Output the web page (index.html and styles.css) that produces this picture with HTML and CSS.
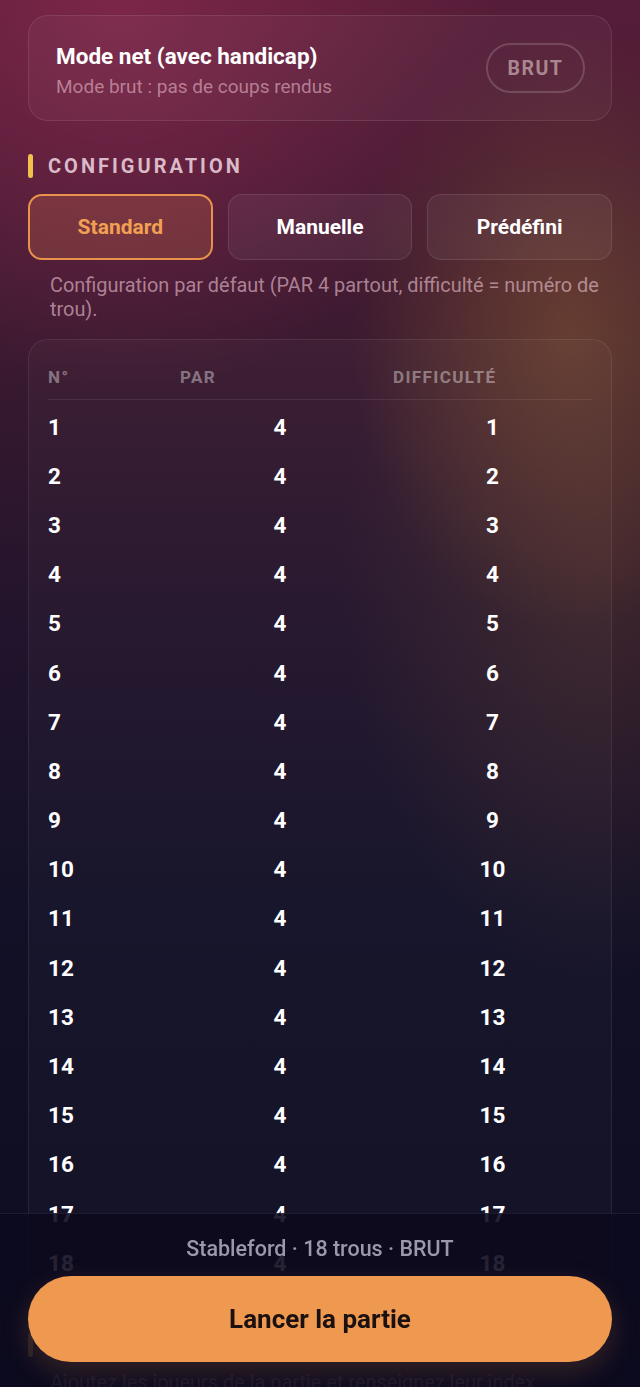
FILE: index.html
```html
<!DOCTYPE html>
<html lang="fr">
<head>
    <meta charset="UTF-8">
    <meta name="viewport" content="width=device-width, initial-scale=1.0">
    <title>Nouvelle partie</title>
    <link rel="stylesheet" href="styles.css">
</head>
<body>
    <div class="page">
        <div class="mode-card">
            <div class="mode-text">
                <div class="mode-title">Mode net (avec handicap)</div>
                <div class="mode-sub">Mode brut : pas de coups rendus</div>
            </div>
            <button class="mode-pill">BRUT</button>
        </div>

        <div class="section-title">CONFIGURATION</div>
        <div class="config-tabs">
            <button class="config-tab active">Standard</button>
            <button class="config-tab">Manuelle</button>
            <button class="config-tab">Prédéfini</button>
        </div>
        <p class="config-desc">Configuration par défaut (PAR 4 partout, difficulté = numéro de trou).</p>

        <div class="holes-card">
            <div class="holes-head">
                <span>N°</span>
                <span>PAR</span>
                <span>DIFFICULTÉ</span>
            </div>
            <div class="holes-body" id="holes"></div>
        </div>

        <div class="section-title">JOUEURS</div>
        <p class="config-desc">Ajoutez les joueurs de la partie et renseignez leur index.</p>
    </div>

    <div class="bottom-bar">
        <div class="summary">Stableford · 18 trous · BRUT</div>
        <button class="start-button">Lancer la partie</button>
    </div>

    <script>
        // 18 trous, PAR 4 partout, difficulté = numéro du trou
        const holes = document.getElementById('holes');
        for (let i = 1; i <= 18; i++) {
            const row = document.createElement('div');
            row.className = 'hole-row';
            row.innerHTML = `<span>${i}</span><span class="par">4</span><span class="diff">${i}</span>`;
            holes.appendChild(row);
        }
    </script>
</body>
</html>
```

FILE: styles.css
```css
body {
    margin: 0;
    min-height: 1387px;
    font-family: Roboto, 'Noto Sans', sans-serif;
    color: #ffffff;
    background:
        radial-gradient(circle at 120px 10px, rgba(140, 42, 80, 0.7), rgba(140, 42, 80, 0) 380px),
        radial-gradient(ellipse 220px 300px at 570px 330px, rgba(125, 80, 50, 0.6), rgba(125, 80, 50, 0)),
        radial-gradient(ellipse 260px 420px at 600px 560px, rgba(90, 55, 45, 0.5), rgba(90, 55, 45, 0)),
        linear-gradient(180deg, #561d38 0px, #3c1a30 330px, #22142c 620px, #131127 900px, #0d0c1f 1387px);
}

button {
    font-family: inherit;
    cursor: pointer;
}

.page {
    padding: 15px 28px 200px;
}

.mode-card {
    display: flex;
    align-items: center;
    justify-content: space-between;
    height: 104px;
    padding: 0 26px 0 27px;
    border: 1px solid rgba(255, 255, 255, 0.09);
    border-radius: 20px;
    background: rgba(255, 255, 255, 0.035);
}

.mode-text {
    padding-top: 5px;
}

.mode-title {
    font-size: 22.5px;
    font-weight: 700;
    line-height: 28px;
}

.mode-sub {
    font-size: 19px;
    line-height: 26px;
    margin-top: 4px;
    color: rgba(230, 185, 200, 0.6);
}

.mode-pill {
    width: 99px;
    height: 50px;
    border: 2px solid rgba(255, 255, 255, 0.17);
    border-radius: 25px;
    background: transparent;
    color: rgba(225, 200, 200, 0.62);
    font-size: 19.5px;
    font-weight: 700;
    letter-spacing: 1.5px;
}

.section-title {
    display: flex;
    align-items: center;
    gap: 15px;
    margin-top: 33px;
    height: 24px;
    font-size: 20px;
    font-weight: 700;
    letter-spacing: 3px;
    color: rgba(240, 215, 225, 0.85);
}

.section-title::before {
    content: '';
    width: 5px;
    height: 24px;
    border-radius: 3px;
    background: #f2c04e;
}

.config-tabs {
    display: grid;
    grid-template-columns: 1fr 1fr 1fr;
    gap: 15px;
    margin-top: 16px;
}

.config-tab {
    height: 66px;
    border: 1px solid rgba(255, 255, 255, 0.1);
    border-radius: 14px;
    background: rgba(255, 255, 255, 0.05);
    color: #ffffff;
    font-size: 21px;
    font-weight: 700;
}

.config-tab.active {
    border: 2px solid #e9924c;
    background: rgba(238, 140, 80, 0.2);
    color: #f2a052;
}

.config-desc {
    margin: 14px 0 0;
    padding-left: 22px;
    font-size: 19.9px;
    line-height: 24px;
    color: rgba(230, 190, 205, 0.64);
}

.holes-card {
    margin-top: 17px;
    padding: 0 19px 12px;
    border: 1px solid rgba(255, 255, 255, 0.08);
    border-radius: 20px;
    background: rgba(255, 255, 255, 0.025);
}

.holes-head,
.hole-row {
    display: grid;
    grid-template-columns: 132px 213px 1fr;
}

.holes-head {
    padding: 27px 0 11px;
    line-height: 21px;
    border-bottom: 1px solid rgba(255, 255, 255, 0.08);
    font-size: 17px;
    font-weight: 700;
    letter-spacing: 1.4px;
    color: rgba(255, 255, 255, 0.4);
}

.holes-body {
    padding-top: 2px;
}

.hole-row {
    height: 49.2px;
    align-items: center;
    font-size: 22.5px;
    font-weight: 700;
}

.hole-row .par {
    text-align: center;
    padding-right: 13px;
}

.hole-row .diff {
    text-align: center;
}

.bottom-bar {
    position: fixed;
    left: 0;
    right: 0;
    bottom: 0;
    height: 173px;
    padding: 0 28px;
    border-top: 1px solid rgba(255, 255, 255, 0.07);
    background: rgba(12, 10, 30, 0.9);
    display: flex;
    flex-direction: column;
    align-items: center;
}

.summary {
    margin-top: 21px;
    font-size: 21.5px;
    font-weight: 500;
    line-height: 28px;
    color: #9a98a9;
}

.start-button {
    margin-top: 13px;
    width: 100%;
    height: 86px;
    border: none;
    border-radius: 43px;
    background: #ee994f;
    color: #1b1110;
    font-size: 26px;
    font-weight: 700;
    box-shadow: 0 10px 28px rgba(238, 150, 80, 0.18);
}
```
